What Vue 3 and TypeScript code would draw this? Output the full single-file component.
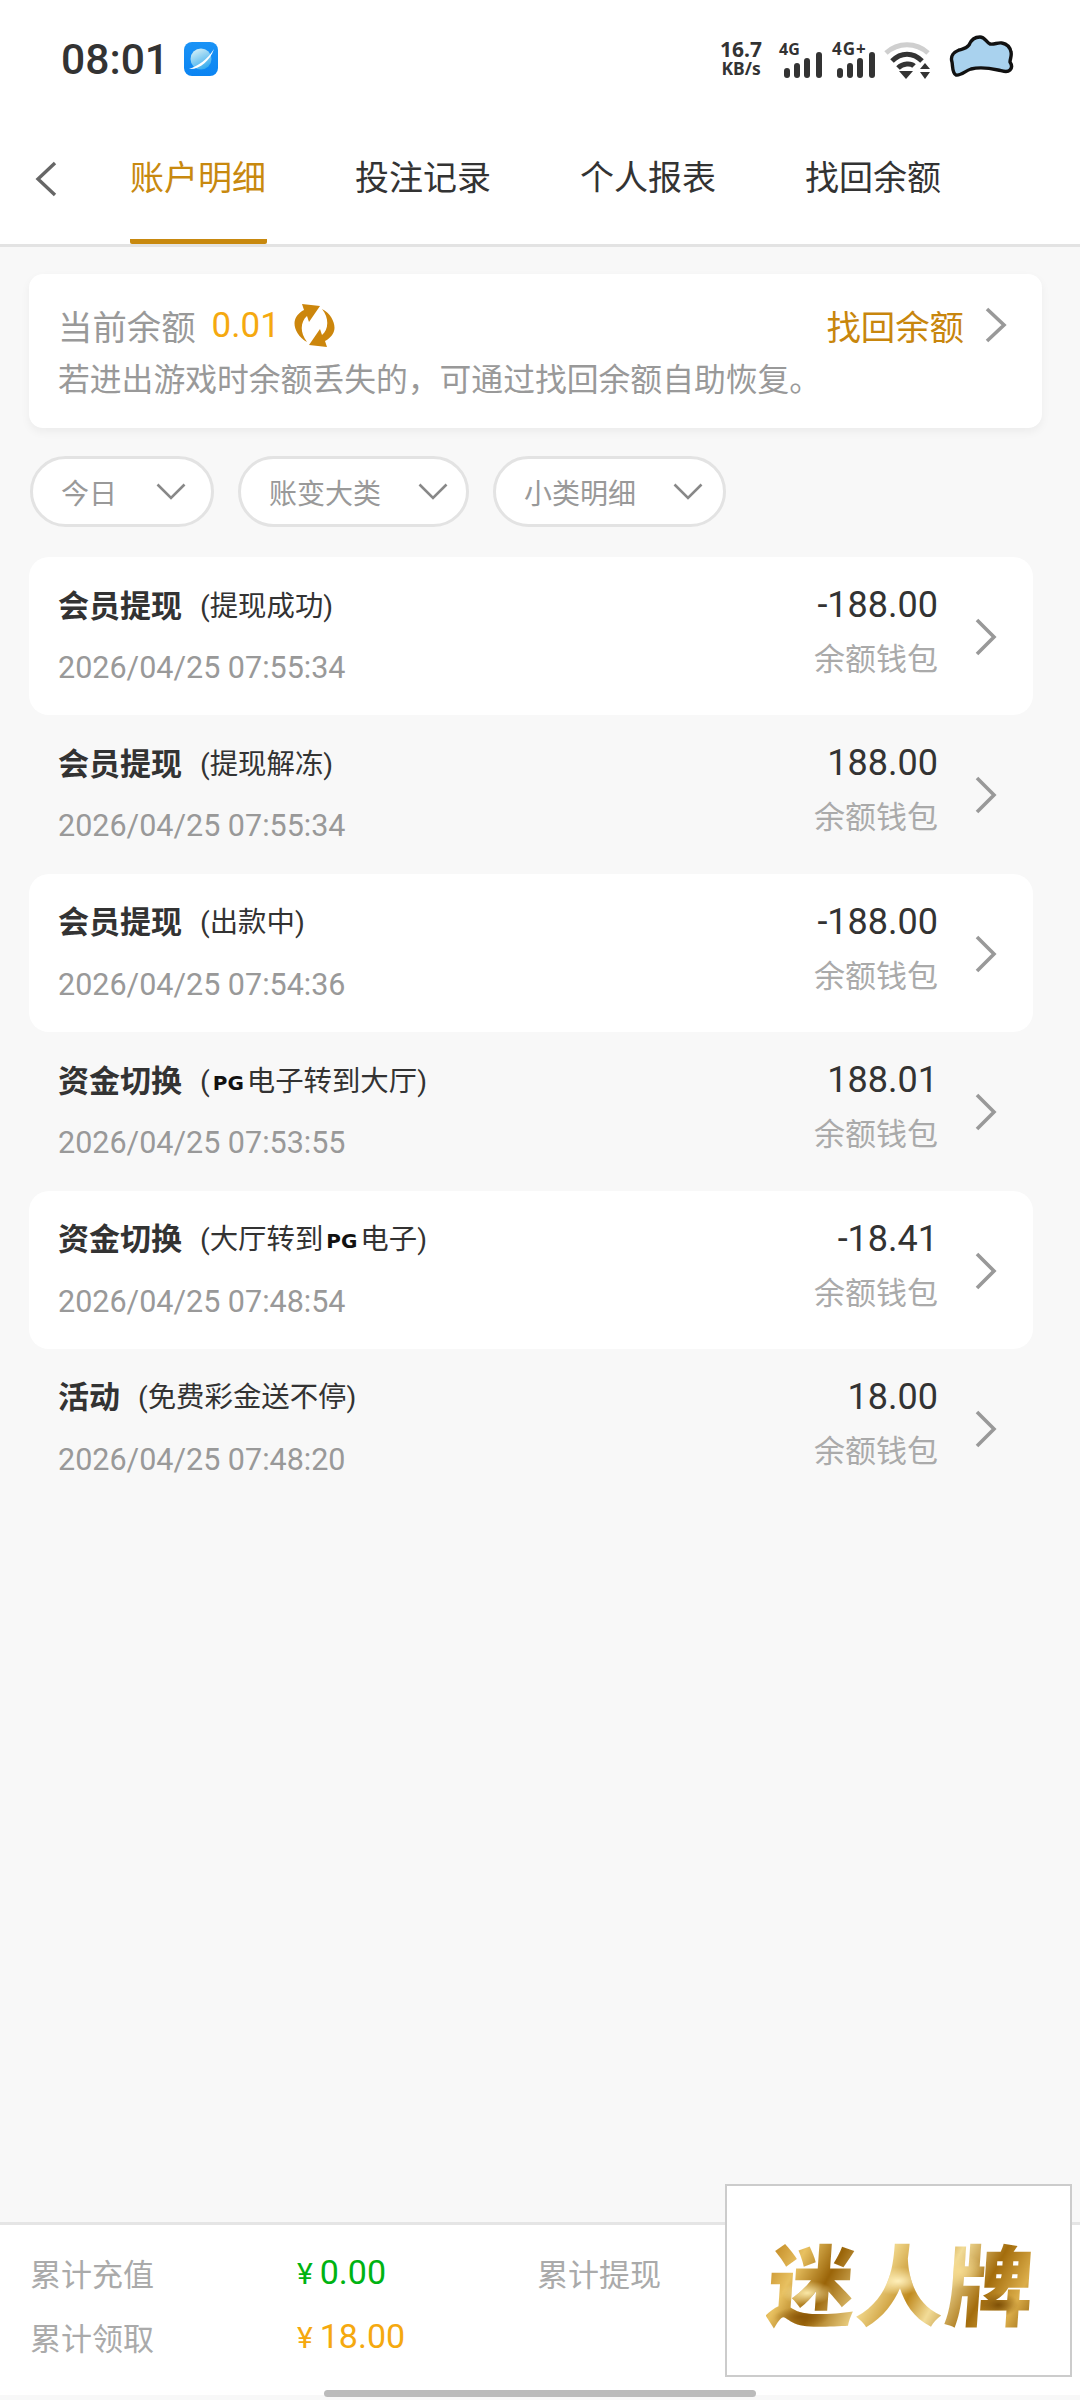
<script setup lang="ts">
interface Row { title: string; sub: string; time: string; amount: string; }
const tabs = ['账户明细', '投注记录', '个人报表', '找回余额'];
const filters = ['今日', '账变大类', '小类明细'];
const rows: Row[] = [
  { title: '会员提现', sub: '(提现成功)', time: '2026/04/25 07:55:34', amount: '-188.00' },
  { title: '会员提现', sub: '(提现解冻)', time: '2026/04/25 07:55:34', amount: '188.00' },
  { title: '会员提现', sub: '(出款中)', time: '2026/04/25 07:54:36', amount: '-188.00' },
  { title: '资金切换', sub: '(|PG|电子转到大厅)', time: '2026/04/25 07:53:55', amount: '188.01' },
  { title: '资金切换', sub: '(大厅转到|PG|电子)', time: '2026/04/25 07:48:54', amount: '-18.41' },
  { title: '活动', sub: '(免费彩金送不停)', time: '2026/04/25 07:48:20', amount: '18.00' },
];
const parts = (s: string) => s.split('|');
</script>

<template>
  <div class="page">
    <div class="status">
      <span class="clock">08:01</span>
      <svg class="planet" viewBox="0 0 34 34" width="34" height="34">
        <defs>
          <linearGradient id="pl" x1="0" y1="0" x2="0" y2="1"><stop offset="0" stop-color="#1a93f6" /><stop offset="1" stop-color="#0b84f2" /></linearGradient>
          <linearGradient id="ball" x1="0.2" y1="0" x2="0.7" y2="1"><stop offset="0" stop-color="#d8f1f6" /><stop offset="1" stop-color="#2fa8ee" /></linearGradient>
        </defs>
        <rect width="34" height="34" rx="8" fill="url(#pl)" />
        <circle cx="17" cy="17" r="10.5" fill="url(#ball)" />
        <path d="M30 7C24 17 14 24 5 27c10 1 21-8 25-20z" fill="#fff" />
      </svg>
      <div class="sys">
        <div class="speed"><span>16.7</span><span>KB/s</span></div>
        <div class="net">
          <span class="net-label">4G</span>
          <svg class="bars" viewBox="0 0 40 26" width="40" height="26"><rect x="1" y="16" width="6" height="10" rx="3" /><rect x="11" y="11" width="6" height="15" rx="3" /><rect x="21" y="6" width="6" height="20" rx="3" /><rect x="33" y="0" width="6" height="26" rx="3" /></svg>
        </div>
        <div class="net net-two">
          <span class="net-label plus">4G+</span>
          <svg class="bars" viewBox="0 0 40 26" width="40" height="26"><rect x="1" y="16" width="6" height="10" rx="3" /><rect x="11" y="11" width="6" height="15" rx="3" /><rect x="21" y="6" width="6" height="20" rx="3" /><rect x="33" y="0" width="6" height="26" rx="3" /></svg>
        </div>
        <svg class="wifi" viewBox="0 0 46 38" width="46" height="38">
          <path d="M2 11C14 0 32 0 44 11" fill="none" stroke="#cfcfcf" stroke-width="5" />
          <path d="M8 19C17 10 29 10 38 19" fill="none" stroke="#333" stroke-width="5" />
          <path d="M14 26C19 21 27 21 30 24" fill="none" stroke="#333" stroke-width="5" />
          <path d="M15 29h14l-7 8z" fill="#333" />
          <path d="M36 27l5-6 5 6zM36 30h10l-5 7z" fill="#333" />
        </svg>
        <svg class="cloud" viewBox="0 0 66 42" width="66" height="42">
          <path d="M3 27C1 21 5 17 10 15c4-1 7-1 10-5 2-5 6-8 11-8 5 0 6 5 10 7 4 1 8-2 12-1 5 1 8 4 9 9 1 4-1 7-1 10 2 3 2 6 0 8-3 3-7 1-12 0-9-2-19-3-27-1-6 2-10 7-15 6-4-2-3-8-4-13z" fill="#a9d2ee" stroke="#111" stroke-width="3.4" stroke-linejoin="round" />
        </svg>
      </div>
    </div>

    <header class="tabbar">
      <svg class="back" viewBox="0 0 24 36" width="24" height="36"><path d="M21 2L4 18l17 16" fill="none" stroke="#666" stroke-width="3.4" /></svg>
      <nav class="tabs">
        <div v-for="(t, i) in tabs" :key="t" class="tab" :class="{ active: i === 0 }">{{ t }}</div>
      </nav>
    </header>

    <section class="balance">
      <div class="bal-top">
        <span class="bal-label">当前余额</span>
        <span class="bal-num">0.01</span>
        <svg class="refresh" viewBox="0 0 41 43" width="41" height="43">
          <path d="M8 0L26 2 15 18l-2-6C7 17 5 28 13 38 3 33-1 22 1 16 2 12 6 8 10 6z" fill="#cc860c" />
          <path d="M8 0L26 2 15 18l-2-6C7 17 5 28 13 38 3 33-1 22 1 16 2 12 6 8 10 6z" fill="#cc860c" transform="rotate(180 20.5 21.5)" />
        </svg>
        <span class="bal-link">找回余额</span>
        <svg class="chev" viewBox="0 0 24 36" width="24" height="36"><path d="M3 2l17 16L3 34" fill="none" stroke="#999" stroke-width="3.6" /></svg>
      </div>
      <p class="bal-desc">若进出游戏时余额丢失的，可通过找回余额自助恢复。</p>
    </section>

    <div class="filters">
      <div v-for="f in filters" :key="f" class="pill">
        <span>{{ f }}</span>
        <svg viewBox="0 0 30 17" width="30" height="17"><path d="M1.5 1.5L15 15 28.5 1.5" fill="none" stroke="#888" stroke-width="2.6" /></svg>
      </div>
    </div>

    <ul class="list">
      <li v-for="(r, i) in rows" :key="i" class="row" :class="{ white: i % 2 === 0 }">
        <div class="left">
          <div class="title-line">
            <b class="title">{{ r.title }}</b>
            <span class="sub">
              <template v-for="(p, j) in parts(r.sub)" :key="j">
                <span v-if="p === 'PG'" class="pg">PG</span>
                <template v-else>{{ p }}</template>
              </template>
            </span>
          </div>
          <div class="time">{{ r.time }}</div>
        </div>
        <div class="right">
          <div class="amount">{{ r.amount }}</div>
          <div class="wallet">余额钱包</div>
        </div>
        <svg class="chev row-chev" viewBox="0 0 24 38" width="24" height="38"><path d="M3 2l17 17L3 36" fill="none" stroke="#999" stroke-width="3.6" /></svg>
      </li>
    </ul>

    <footer class="foot">
      <div class="foot-line">
        <span class="foot-label">累计充值</span>
        <span class="foot-val green"><i>¥</i>0.00</span>
        <span class="foot-label">累计提现</span>
      </div>
      <div class="foot-line">
        <span class="foot-label">累计领取</span>
        <span class="foot-val orange"><i>¥</i>18.00</span>
      </div>
      <div class="home"></div>
    </footer>

    <div class="brand"><span class="brand-text">迷人牌</span></div>
  </div>
</template>

<style>
html, body { margin: 0; background: #f8f8f8; }
</style>

<style scoped>
.page {
  position: relative;
  width: 1080px;
  height: 2400px;
  display: flex;
  flex-direction: column;
  background: #f8f8f8;
  font-family: Roboto, "Noto Sans CJK SC", sans-serif;
  overflow: hidden;
}
.status {
  height: 114px;
  box-sizing: border-box;
  background: #fff;
  display: flex;
  align-items: flex-start;
  padding: 42px 65px 0 61px;
}
.clock { font-size: 42.6px; line-height: 34px; font-weight: 500; color: #333; }
.planet { margin-left: 15px; }
.sys { margin-left: auto; display: flex; align-items: flex-start; }
.speed {
  display: flex; flex-direction: column; align-items: center;
  font-family: "Noto Sans", sans-serif; font-weight: 700; color: #333;
  margin-top: -4px;
}
.speed span:first-child { font-size: 21px; line-height: 22px; }
.speed span:last-child { font-size: 17.5px; line-height: 17px; }
.net { position: relative; width: 41px; height: 37px; margin-left: 19px; }
.net-two { margin-left: 12px; }
.net-label {
  position: absolute; left: -2px; top: -3px;
  font-family: "Noto Sans", sans-serif; font-weight: 700; font-size: 16px; line-height: 20px; color: #333;
  white-space: nowrap;
}
.net-label.plus { font-size: 17px; letter-spacing: 1px; }
.bars { position: absolute; left: 2px; top: 10px; fill: #333; }
.wifi { margin-left: 9px; }
.cloud { margin-left: 19px; margin-top: -7px; }

.tabbar {
  height: 133px;
  box-sizing: border-box;
  background: #fff;
  border-bottom: 3px solid #e3e3e3;
  display: flex;
  padding-left: 34px;
}
.back { margin-top: 47px; }
.tabs { display: flex; gap: 88px; margin-left: 72px; }
.tab {
  width: 137px;
  height: 130px;
  box-sizing: border-box;
  padding-top: 44px;
  font-size: 34px;
  line-height: 40px;
  color: #333;
  white-space: nowrap;
}
.tab.active { color: #c8890f; border-bottom: 5px solid #c8890f; border-radius: 0 0 2px 2px; }

.balance {
  margin: 27px 38px 0 29px;
  height: 154px;
  box-sizing: border-box;
  padding: 29px 34px 0 29px;
  background: #fff;
  border-radius: 14px;
  box-shadow: 0 4px 10px rgba(0, 0, 0, 0.05);
}
.bal-top { display: flex; align-items: center; height: 44px; }
.bal-label { font-size: 34.4px; color: #999; }
.bal-num { font-size: 35px; color: #f5a90f; margin-left: 16px; }
.refresh { margin-left: 14px; }
.bal-link { font-size: 34.4px; color: #c8860d; margin-left: auto; }
.bal-top .chev { margin-left: 20px; }
.bal-desc { margin: 11px 0 0; font-size: 31.8px; line-height: 44px; color: #999; white-space: nowrap; }

.filters { display: flex; gap: 24px; margin: 28px 0 0 30px; }
.pill {
  height: 71px;
  box-sizing: border-box;
  border: 3px solid #e3e3e3;
  border-radius: 36px;
  background: #fff;
  display: flex;
  align-items: center;
  padding: 0 18px 0 28px;
  font-size: 28px;
  color: #999;
}
.pill svg { margin-left: 37px; }
.pill:first-child svg { margin-left: 39px; margin-right: 7px; }
.pill:last-child svg { margin-right: 2px; }

.list { list-style: none; margin: 30px 0 0 29px; padding: 0; width: 1004px; }
.row {
  height: 158.4px;
  box-sizing: border-box;
  border-radius: 20px;
  display: flex;
  align-items: flex-start;
  padding-left: 29px;
}
.row.white { background: #fff; }
.left { flex: 1; padding-top: 28px; }
.title-line { display: flex; align-items: center; height: 36px; }
.title { font-size: 31px; font-weight: 700; color: #333; white-space: nowrap; }
.sub { font-size: 28.4px; color: #333; margin-left: 18px; white-space: nowrap; }
.pg {
  font-family: "DejaVu Sans", sans-serif; font-weight: 700; font-size: 20px; letter-spacing: 0;
  color: #111; padding: 0 3px 0 3px; vertical-align: 1px;
}
.time { margin-top: 29px; font-size: 30.5px; line-height: 36px; color: #999; }
.right { width: 203px; text-align: right; padding-top: 26px; }
.amount { font-size: 36px; line-height: 44px; color: #333; }
.wallet { margin-top: 12px; font-size: 31px; line-height: 42px; color: #aaa; }
.row-chev { margin: 61px 35px 0 36px; }

.foot {
  position: relative;
  margin-top: auto;
  margin-bottom: 5px;
  height: 173px;
  box-sizing: border-box;
  background: #fff;
  border-top: 3px solid #e5e5e5;
  padding-top: 25px;
}
.foot-line { display: flex; align-items: center; height: 44px; margin-bottom: 20px; padding-left: 30px; }
.foot-label { width: 267px; font-size: 31px; color: #aaa; white-space: nowrap; }
.foot-val { width: 240px; font-size: 34px; white-space: nowrap; }
.foot-val i { font-style: normal; font-size: 30px; margin-right: 7px; }
.green { color: #00b312; }
.orange { color: #f5a90f; }
.home {
  position: absolute;
  left: 324px; bottom: -2px;
  width: 432px; height: 7px;
  border-radius: 4px;
  background: #bbb;
}

.brand {
  position: absolute;
  left: 725px; top: 2184px;
  width: 347px; height: 193px;
  box-sizing: border-box;
  border: 2px solid #ccc;
  background: #fff;
  display: flex;
  align-items: center;
  justify-content: center;
  padding-left: 6px;
}
.brand-text {
  font-family: "Noto Sans CJK SC", sans-serif;
  font-weight: 900;
  font-size: 88px;
  line-height: 100px;
  letter-spacing: 1px;
  white-space: nowrap;
  background:
    radial-gradient(ellipse 26px 12px at 40px 62px, #fbe9a8 0%, rgba(251, 233, 168, 0) 100%),
    radial-gradient(ellipse 30px 14px at 130px 50px, #fff0bb 0%, rgba(255, 240, 187, 0) 100%),
    radial-gradient(ellipse 24px 18px at 190px 40px, #f5da8e 0%, rgba(245, 218, 142, 0) 100%),
    radial-gradient(ellipse 20px 12px at 232px 74px, #7d4f06 0%, rgba(125, 79, 6, 0) 100%),
    radial-gradient(ellipse 28px 10px at 36px 86px, #8a5607 0%, rgba(138, 86, 7, 0) 100%),
    linear-gradient(115deg, #b87a12 0%, #e8c161 14%, #9a6408 26%, #f0d68a 42%, #c08a1f 55%, #f2dc98 64%, #a36c0c 78%, #dcae4a 90%, #8f5e0a 100%);
  -webkit-background-clip: text;
  background-clip: text;
  color: transparent;
  transform: skewX(-4deg);
}
</style>
